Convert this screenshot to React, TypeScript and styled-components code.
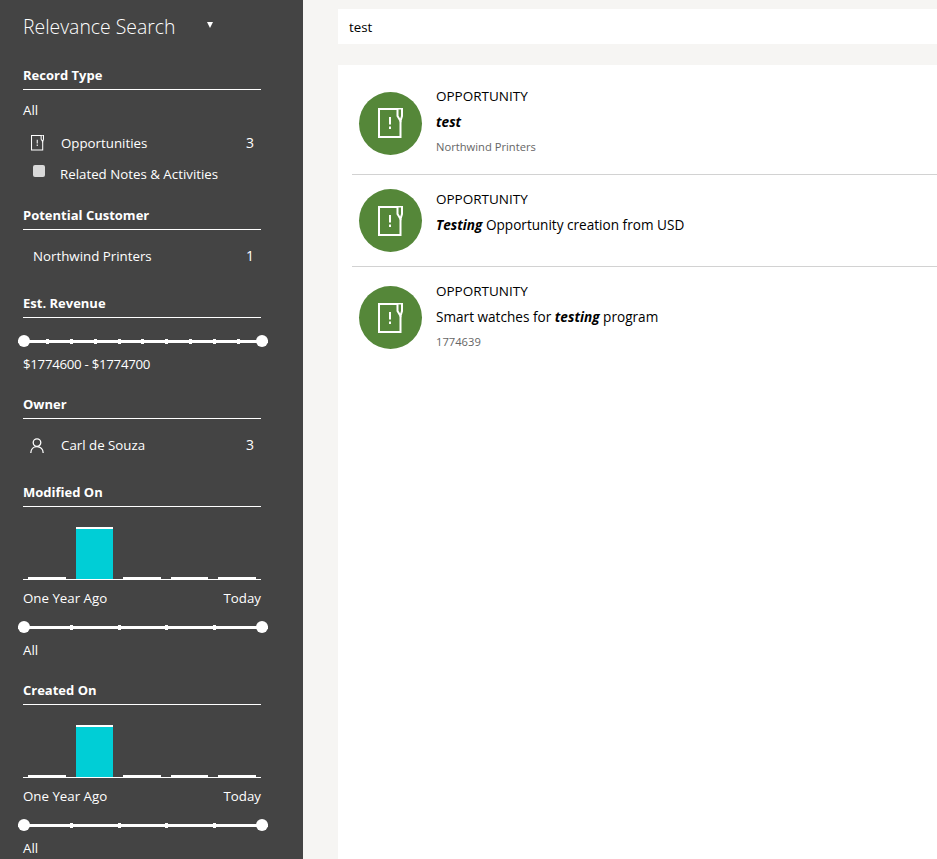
import React from 'react';
import styled, { createGlobalStyle } from 'styled-components';

const GlobalStyle = createGlobalStyle`
  html, body {
    margin: 0;
    padding: 0;
    height: 100%;
    overflow: hidden;
  }
  body {
    font-family: "Open Sans", "Noto Sans", sans-serif;
    font-size: 13.3px;
    line-height: 20px;
  }
  * {
    box-sizing: border-box;
  }
`

const Page = styled.div`
  display: flex;
  width: 937px;
  height: 859px;
  overflow: hidden;
  background: #f6f5f3;
`

const Sidebar = styled.aside`
  flex: 0 0 303px;
  min-width: 0;
  padding: 12px 42px 0 23px;
  background: #444444;
  color: #ffffff;
`

const TitleRow = styled.div`
  display: flex;
  height: 30px;
  align-items: center;
`

const Title = styled.h1`
  margin: 0;
  width: 184px;
  font-size: 19.4px;
  font-weight: 300;
  line-height: 30px;
  white-space: nowrap;
`

const Caret = styled.span`
  width: 0;
  height: 0;
  margin-top: -5px;
  border-left: 3px solid transparent;
  border-right: 3px solid transparent;
  border-top: 6px solid #ffffff;
`

const Heading = styled.h2<{ $top: number }>`
  margin: ${({ $top }) => $top}px 0 0;
  padding-bottom: 4px;
  border-bottom: 1px solid #ffffff;
  font-size: 13px;
  font-weight: 700;
  line-height: 20px;
`

const Plain = styled.div<{ $top: number; $tight?: boolean }>`
  margin-top: ${({ $top }) => $top}px;
  height: 20px;
  white-space: nowrap;
  letter-spacing: ${({ $tight }) => ($tight ? '-0.3px' : 'normal')};
`

const Row = styled.div<{ $top: number; $indent?: number }>`
  display: flex;
  align-items: center;
  height: 20px;
  margin-top: ${({ $top }) => $top}px;
  padding: 0 7px 0 ${({ $indent }) => $indent ?? 8}px;
`

const RowIcon = styled.span`
  display: flex;
  flex: 0 0 30px;
  align-items: center;
`

const RowLabel = styled.span<{ $shift?: number }>`
  flex: 1;
  margin-left: ${({ $shift }) => $shift ?? 0}px;
  white-space: nowrap;
`

const Count = styled.span`
  font-size: 14px;
`

const Checkbox = styled.span`
  width: 12px;
  height: 12px;
  margin: -6px 0 0 2px;
  border-radius: 2px;
  background: #d9d9d9;
`

const Slider = styled.div<{ $top: number }>`
  display: flex;
  justify-content: space-between;
  align-items: center;
  width: 250px;
  height: 12px;
  margin: ${({ $top }) => $top}px 0 0 -5px;
  background: linear-gradient(#ffffff, #ffffff) center / 100% 3px no-repeat;
`

const Stop = styled.span`
  display: flex;
  width: 12px;
  justify-content: center;
  align-items: center;
`

const Tick = styled.span`
  width: 3px;
  height: 5px;
  background: #ffffff;
`

const Handle = styled.span`
  width: 12px;
  height: 12px;
  border-radius: 50%;
  background: #ffffff;
`

const Chart = styled.div`
  display: grid;
  grid-template-columns: repeat(5, 1fr);
  column-gap: 10px;
  align-items: end;
  height: 53px;
  margin-top: 20px;
  padding: 0 5px;
  border-bottom: 1px solid #ffffff;
`

const Bar = styled.div<{ $tall?: boolean }>`
  height: ${({ $tall }) => ($tall ? '52px' : '2px')};
  border-top: 2px solid #ffffff;
  background: #00ced6;
`

const AxisLabels = styled.div`
  display: flex;
  justify-content: space-between;
  height: 20px;
  margin-top: 8px;
`

const Main = styled.main`
  display: flex;
  flex: 1;
  min-width: 0;
  flex-direction: column;
  padding: 9px 0 0 35px;
`

const SearchBox = styled.div`
  height: 35px;
  padding: 0 11px;
  background: #ffffff;
  color: #000000;
  line-height: 36px;
`

const Results = styled.div`
  flex: 1;
  margin-top: 21px;
  padding: 7px 0 0 14px;
  background: #ffffff;
`

const Item = styled.article<{ $last?: boolean }>`
  display: flex;
  min-height: 92px;
  align-items: center;
  padding-left: 7px;
  border-bottom: ${({ $last }) => ($last ? 'none' : '1px solid #d2d2d2')};
`

const Circle = styled.div`
  display: flex;
  flex: 0 0 63px;
  height: 63px;
  margin-right: 14px;
  align-items: center;
  justify-content: center;
  border-radius: 50%;
  background: #558739;
`

const ItemText = styled.div<{ $last?: boolean }>`
  align-self: flex-start;
  padding: 14px 0 ${({ $last }) => ($last ? 16 : 17)}px;
  color: #000000;
`

const ItemType = styled.div`
  height: 20px;
  font-size: 13.5px;
`

const ItemTitle = styled.div`
  height: 20px;
  margin-top: 6px;
  font-size: 13.6px;
  font-weight: 500;
`

const ItemSub = styled.div`
  height: 20px;
  margin-top: 5px;
  font-size: 11.2px;
  color: #666666;
`

const Hit = styled.b`
  font-style: italic;
  font-weight: 700;
`

const PersonIcon = styled.svg`
  width: 14px;
  height: 15px;
  margin-left: -1px;
  fill: none;
  stroke: #ffffff;
  stroke-width: 1.3;
`

const OpportunityIcon = ({ width, stroke }: { width: number; stroke: number }) => (
  <svg width={width} height={(width * 30) / 25} viewBox="0 0 25 30" fill="none" stroke="#fff" strokeWidth={stroke}>
    <path d="M19.5 1H1V29H22.5V13" />
    <path d="M19.5 .5V8L22.500 13L24 8V.5Z" />
    <path d="M12 9V16.500M12 18.500V21" />
  </svg>
)

const RangeSlider = ({ top, ticks }: { top: number; ticks: number }) => (
  <Slider $top={top}>
    <Handle />
    {Array.from({ length: ticks }, (_, i) => (
      <Stop key={i}>
        <Tick />
      </Stop>
    ))}
    <Handle />
  </Slider>
)

const DateFilter = ({ top, name }: { top: number; name: string }) => (
  <>
    <Heading $top={top}>{name}</Heading>
    <Chart>
      <Bar />
      <Bar $tall />
      <Bar />
      <Bar />
      <Bar />
    </Chart>
    <AxisLabels>
      <span>One Year Ago</span>
      <span>Today</span>
    </AxisLabels>
    <RangeSlider top={13} ticks={4} />
    <Plain $top={7}>All</Plain>
  </>
)

export default function App() {
  return (
    <Page>
      <GlobalStyle />
      <Sidebar>
        <TitleRow>
          <Title>Relevance Search</Title>
          <Caret />
        </TitleRow>

        <Heading $top={23}>Record Type</Heading>
        <Plain $top={10}>All</Plain>
        <Row $top={13}>
          <RowIcon>
            <OpportunityIcon width={13} stroke={2} />
          </RowIcon>
          <RowLabel>Opportunities</RowLabel>
          <Count>3</Count>
        </Row>
        <Row $top={11}>
          <RowIcon>
            <Checkbox />
          </RowIcon>
          <RowLabel $shift={-1}>Related Notes &amp; Activities</RowLabel>
        </Row>

        <Heading $top={21}>Potential Customer</Heading>
        <Row $top={16} $indent={10}>
          <RowLabel>Northwind Printers</RowLabel>
          <Count>1</Count>
        </Row>

        <Heading $top={27}>Est. Revenue</Heading>
        <RangeSlider top={17} ticks={9} />
        <Plain $top={7} $tight>$1774600 - $1774700</Plain>

        <Heading $top={20}>Owner</Heading>
        <Row $top={16}>
          <RowIcon>
            <PersonIcon viewBox="0 0 14 15">
              <circle cx="7" cy="4.6" r="3.8" />
              <path d="M.8 15c0-3.8 2.6-6.4 6.2-6.4s6.200 2.600 6.200 6.400" />
            </PersonIcon>
          </RowIcon>
          <RowLabel>Carl de Souza</RowLabel>
          <Count>3</Count>
        </Row>

        <DateFilter top={27} name="Modified On" />
        <DateFilter top={20} name="Created On" />
      </Sidebar>

      <Main>
        <SearchBox>test</SearchBox>
        <Results>
          <Item>
            <Circle>
              <OpportunityIcon width={25} stroke={2} />
            </Circle>
            <ItemText>
              <ItemType>OPPORTUNITY</ItemType>
              <ItemTitle>
                <Hit>test</Hit>
              </ItemTitle>
              <ItemSub>Northwind Printers</ItemSub>
            </ItemText>
          </Item>
          <Item>
            <Circle>
              <OpportunityIcon width={25} stroke={2} />
            </Circle>
            <ItemText>
              <ItemType>OPPORTUNITY</ItemType>
              <ItemTitle>
                <Hit>Testing</Hit> Opportunity creation from USD
              </ItemTitle>
            </ItemText>
          </Item>
          <Item $last>
            <Circle>
              <OpportunityIcon width={25} stroke={2} />
            </Circle>
            <ItemText $last>
              <ItemType>OPPORTUNITY</ItemType>
              <ItemTitle>
                Smart watches for <Hit>testing</Hit> program
              </ItemTitle>
              <ItemSub>1774639</ItemSub>
            </ItemText>
          </Item>
        </Results>
      </Main>
    </Page>
  );
}
